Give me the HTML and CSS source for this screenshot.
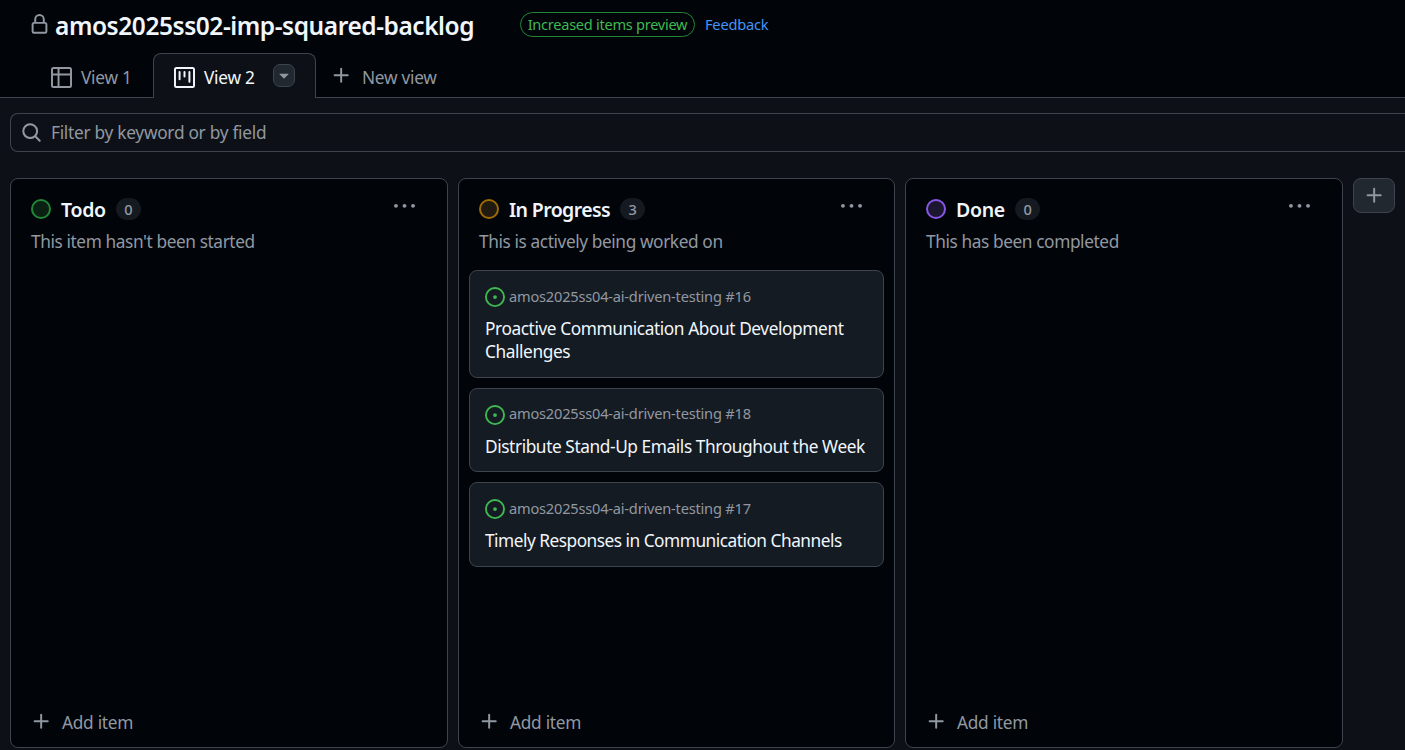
FILE: index.html
```html
<!DOCTYPE html>
<html lang="en">
<head>
<meta charset="utf-8">
<title>amos2025ss02-imp-squared-backlog</title>
<link rel="stylesheet" href="styles.css">
</head>
<body>
<svg class="sprite" aria-hidden="true">
  <symbol id="plus" viewBox="0 0 16 16"><path d="M7.75 2a.75.75 0 0 1 .75.75V7h4.25a.75.75 0 0 1 0 1.5H8.5v4.25a.75.75 0 0 1-1.5 0V8.5H2.75a.75.75 0 0 1 0-1.5H7V2.75A.75.75 0 0 1 7.75 2Z"/></symbol>
  <symbol id="dots" viewBox="0 0 16 16"><path d="M8 9a1.5 1.5 0 1 0 0-3 1.5 1.5 0 0 0 0 3ZM1.5 9a1.5 1.5 0 1 0 0-3 1.5 1.5 0 0 0 0 3Zm13 0a1.5 1.5 0 1 0 0-3 1.5 1.5 0 0 0 0 3Z"/></symbol>
  <symbol id="issue" viewBox="0 0 16 16"><path d="M8 9.5a1.5 1.5 0 1 0 0-3 1.5 1.5 0 0 0 0 3Z"/><path d="M8 0a8 8 0 1 1 0 16A8 8 0 0 1 8 0ZM1.5 8a6.5 6.5 0 1 0 13 0 6.5 6.5 0 0 0-13 0Z"/></symbol>
</svg>
<header class="top">
  <div class="title-row">
    <svg class="lock" viewBox="0 0 16 16"><path d="M4 4a4 4 0 0 1 8 0v2h.25c.966 0 1.75.784 1.75 1.75v5.5A1.75 1.75 0 0 1 12.25 15h-8.5A1.75 1.75 0 0 1 2 13.25v-5.5C2 6.784 2.784 6 3.75 6H4Zm8.25 3.5h-8.5a.25.25 0 0 0-.25.25v5.5c0 .138.112.25.25.25h8.5a.25.25 0 0 0 .25-.25v-5.5a.25.25 0 0 0-.25-.25ZM10.5 6V4a2.5 2.5 0 1 0-5 0v2Z"/></svg>
    <h1 class="title">amos2025ss02-imp-squared-backlog</h1>
    <span class="preview"><span class="small">Increased items preview</span></span>
    <a class="small feedback">Feedback</a>
  </div>
  <nav class="tabs">
    <a class="tab first">
      <svg class="icon" viewBox="0 0 16 16"><path d="M0 1.75C0 .784.784 0 1.75 0h12.5C15.216 0 16 .784 16 1.75v12.5A1.75 1.75 0 0 1 14.25 16H1.75A1.75 1.75 0 0 1 0 14.25ZM6.5 6.5v8h7.75a.25.25 0 0 0 .25-.25V6.5Zm8-1.5V1.75a.25.25 0 0 0-.25-.25H6.5V5Zm-13 1.5v7.75c0 .138.112.25.25.25H5v-8ZM5 5V1.5H1.75a.25.25 0 0 0-.25.25V5Z"/></svg>
      <span class="text">View 1</span>
    </a>
    <a class="tab active">
      <svg class="icon" viewBox="0 0 16 16"><path d="M1.75 0h12.5C15.216 0 16 .784 16 1.75v12.5A1.75 1.75 0 0 1 14.25 16H1.75A1.75 1.75 0 0 1 0 14.25V1.75C0 .784.784 0 1.75 0ZM1.5 1.75v12.5c0 .138.112.25.25.25h12.5a.25.25 0 0 0 .25-.25V1.75a.25.25 0 0 0-.25-.25H1.75a.25.25 0 0 0-.25.25ZM11.75 3a.75.75 0 0 1 .75.75v7.5a.75.75 0 0 1-1.5 0v-7.5a.75.75 0 0 1 .75-.75Zm-8.25.75a.75.75 0 0 1 1.5 0v5.5a.75.75 0 0 1-1.5 0ZM8 3a.75.75 0 0 1 .75.75v3.5a.75.75 0 0 1-1.5 0v-3.5A.75.75 0 0 1 8 3Z"/></svg>
      <span class="text">View 2</span>
      <span class="caret"><svg viewBox="0 0 16 16"><path d="m4.427 7.427 3.396 3.396a.25.25 0 0 0 .354 0l3.396-3.396A.25.25 0 0 0 11.396 7H4.604a.25.25 0 0 0-.177.427Z"/></svg></span>
    </a>
    <a class="tab new"><svg class="icon"><use href="#plus"/></svg><span class="text">New view</span></a>
  </nav>
</header>
<main class="board-area">
  <div class="filter">
    <svg class="search" viewBox="0 0 16 16"><path d="M10.68 11.74a6 6 0 0 1-7.922-8.982 6 6 0 0 1 8.982 7.922l3.04 3.04a.749.749 0 0 1-.326 1.275.749.749 0 0 1-.734-.215ZM11.5 7a4.499 4.499 0 1 0-8.997 0A4.499 4.499 0 0 0 11.5 7Z"/></svg>
    <span class="text">Filter by keyword or by field</span>
  </div>
  <div class="board">
    <section class="column">
      <div class="col-head"><span class="status todo"></span><h2>Todo</h2><span class="count">0</span><svg class="menu"><use href="#dots"/></svg></div>
      <p class="desc">This item hasn't been started</p>
      <div class="cards"></div>
      <div class="add"><svg class="icon"><use href="#plus"/></svg><span class="text">Add item</span></div>
    </section>
    <section class="column">
      <div class="col-head"><span class="status progress"></span><h2 class="long">In Progress</h2><span class="count">3</span><svg class="menu"><use href="#dots"/></svg></div>
      <p class="desc">This is actively being worked on</p>
      <div class="cards">
        <article class="card"><div class="repo"><svg class="open"><use href="#issue"/></svg><span class="small">amos2025ss04-ai-driven-testing #16</span></div><h3>Proactive Communication About Development<br>Challenges</h3></article>
        <article class="card"><div class="repo"><svg class="open"><use href="#issue"/></svg><span class="small">amos2025ss04-ai-driven-testing #18</span></div><h3>Distribute Stand-Up Emails Throughout the Week</h3></article>
        <article class="card"><div class="repo"><svg class="open"><use href="#issue"/></svg><span class="small">amos2025ss04-ai-driven-testing #17</span></div><h3 class="tight">Timely Responses in Communication Channels</h3></article>
      </div>
      <div class="add"><svg class="icon"><use href="#plus"/></svg><span class="text">Add item</span></div>
    </section>
    <section class="column">
      <div class="col-head"><span class="status done"></span><h2>Done</h2><span class="count">0</span><svg class="menu"><use href="#dots"/></svg></div>
      <p class="desc">This has been completed</p>
      <div class="cards"></div>
      <div class="add"><svg class="icon"><use href="#plus"/></svg><span class="text">Add item</span></div>
    </section>
    <button class="add-column" aria-label="Add column"><svg class="icon"><use href="#plus"/></svg></button>
  </div>
</main>
</body>
</html>
```
FILE: styles.css
```css
* { box-sizing: border-box; }
body {
  margin: 0;
  width: 1405px;
  height: 750px;
  overflow: hidden;
  display: flex;
  flex-direction: column;
  background: #0d1117;
  color: #f0f6fc;
  font: 17.3px/24px "Noto Sans", "Open Sans", sans-serif;
  letter-spacing: -.28px;
}
svg { fill: #9198a1; flex: none; display: block; }
h1, h2, h3, p { margin: 0; }
span, h1, h2, h3, a { white-space: nowrap; }
.sprite { position: absolute; width: 0; height: 0; }
.icon { width: 21px; height: 21px; }
.small { font-size: 14.6px; letter-spacing: -.2px; }

.top { height: 98px; background: #010409; display: flex; flex-direction: column; }
.title-row { height: 53px; display: flex; align-items: center; padding: 0 0 4px 29px; }
.lock { width: 21px; height: 21px; margin-top: -1px; }
.title { font-size: 24.5px; font-weight: 600; line-height: 32px; letter-spacing: -.45px; margin: 2px 0 0 5px; width: 420px; }
.preview {
  width: 175px; height: 25px; margin-left: 45px;
  border: 1px solid #238636; border-radius: 13px;
  display: flex; align-items: center; justify-content: center;
  color: #3fb950;
}
.preview .small { letter-spacing: -.28px; margin-top: -2px; }
.feedback { color: #4493f8; margin: -2px 0 0 10px; }

.tabs { display: flex; height: 45px; color: #9198a1; }
.tab { display: flex; align-items: center; height: 45px; border-bottom: 1px solid #3d444d; padding-top: 4px; }
.tab .text { margin: 1px 0 0 10px; }
.first { width: 153px; padding-left: 51px; }
.first .text { margin-left: 9px; }
.active {
  width: 163px; padding: 3px 0 0 20px;
  border: 1px solid #3d444d; border-bottom: 0; border-radius: 8px 8px 0 0;
  background: #0d1117; color: #f0f6fc;
}
.active .icon { fill: #f0f6fc; }
.active .text { margin: 0 0 0 9px; }
.caret {
  width: 22px; height: 23px; margin: -5px 20px 0 auto;
  border: 1px solid #3d444d; border-radius: 7px; background: #212830;
  display: flex; align-items: center; justify-content: center;
}
.caret svg { width: 20px; height: 20px; }
.new { flex: 1; padding-left: 15px; }
.new .icon { margin-top: -3px; }

.board-area { flex: 1; padding: 15px 0 2px 10px; display: flex; flex-direction: column; }
.filter {
  height: 39px; flex: none; display: flex; align-items: center; padding: 0 0 0 10px;
  border: 1px solid #3d444d; border-right: 0; border-radius: 8px 0 0 8px; color: #9198a1;
}
.search { width: 21px; height: 21px; }
.filter .text { margin: 1px 0 0 9px; }

.board { flex: 1; margin-top: 26px; display: grid; grid-template-columns: 438px 437px 438px 42px; gap: 10px; }
.column {
  background: #010409; border: 1px solid #3d444d; border-radius: 8px;
  padding: 16px 10px 11px; display: flex; flex-direction: column;
}
.col-head { height: 27px; display: flex; align-items: center; padding: 0 22px 0 10px; }
.status { width: 20px; height: 20px; border-radius: 50%; border: 2px solid; }
.todo { border-color: #238636; background: #0a2012; }
.progress { border-color: #9e6a03; background: #201a10; }
.done { border-color: #8957e5; background: #1c1630; }
h2 { font-size: 19.5px; font-weight: 600; line-height: 27px; letter-spacing: -.3px; margin: 2px 0 0 10px; }
.long { letter-spacing: -.62px; }
.count {
  width: 25px; height: 22px; border-radius: 11px; margin-left: 10px; background: #151a21;
  color: #9198a1; font-size: 14.6px; font-weight: 500; line-height: 22px; text-align: center;
}
.menu { width: 21px; height: 21px; margin: -5px 0 0 auto; }
.desc { color: #9198a1; line-height: 24px; letter-spacing: -.41px; padding-left: 10px; margin-top: 8px; }
.cards { flex: 1; margin-top: 16px; display: flex; flex-direction: column; gap: 10px; }
.card { border: 1px solid #3d444d; border-radius: 8px; background: #151b23; padding: 15px 15px 13.5px; }
.repo { display: flex; align-items: center; height: 22px; color: #9198a1; }
.repo .small { margin: -3px 0 0 4px; }
.open { width: 20px; height: 20px; fill: #3fb950; }
h3 { font-size: 17.3px; font-weight: 400; line-height: 23px; letter-spacing: -.42px; margin-top: 9px; }
.tight { letter-spacing: -.5px; }
.add { display: flex; align-items: center; height: 26px; color: #9198a1; padding-left: 10px; }
.add .icon { margin-top: -4px; }
.add .text { margin-left: 10px; }
.add-column {
  height: 35px; padding: 0; display: flex; align-items: center; justify-content: center;
  background: #212830; border: 1px solid #3d444d; border-radius: 8px;
}
```
